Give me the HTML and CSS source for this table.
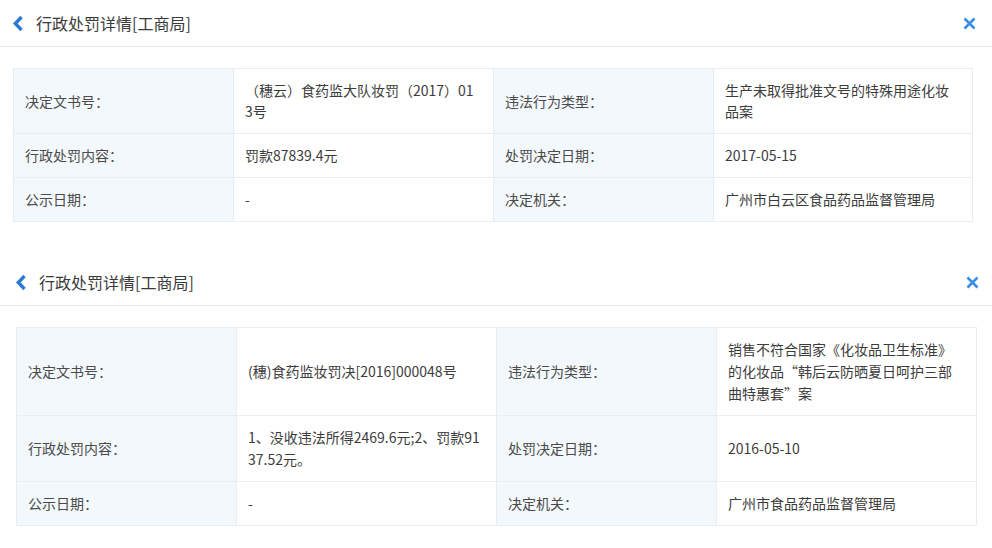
FILE: index.html
```html
<!DOCTYPE html>
<html lang="zh-CN">
<head>
<meta charset="UTF-8">
<title>行政处罚详情</title>
<link rel="stylesheet" href="styles.css">
</head>
<body>

<div class="panel">
    <div class="panel-head">
        <svg class="back" width="12" height="17" viewBox="0 0 12 17"><path d="M9.5 2 L3.3 8.5 L9.5 15" fill="none" stroke="#2b7bd6" stroke-width="3.4"/></svg>
        <span class="title">行政处罚详情[工商局]</span>
        <svg class="close" width="13" height="13" viewBox="0 0 13 13"><path d="M1.5 1.5 L11.5 11.5 M11.5 1.5 L1.5 11.5" stroke="#3a8ee6" stroke-width="2.6"/></svg>
    </div>
    <table class="detail">
        <tr>
            <td class="label">决定文书号：</td>
            <td>（穗云）食药监大队妆罚（2017）013号</td>
            <td class="label">违法行为类型：</td>
            <td>生产未取得批准文号的特殊用途化妆品案</td>
        </tr>
        <tr>
            <td class="label">行政处罚内容：</td>
            <td>罚款87839.4元</td>
            <td class="label">处罚决定日期：</td>
            <td>2017-05-15</td>
        </tr>
        <tr>
            <td class="label">公示日期：</td>
            <td>-</td>
            <td class="label">决定机关：</td>
            <td>广州市白云区食品药品监督管理局</td>
        </tr>
    </table>
</div>

<div class="panel panel-second">
    <div class="panel-head">
        <svg class="back" width="12" height="17" viewBox="0 0 12 17"><path d="M9.5 2 L3.3 8.5 L9.5 15" fill="none" stroke="#2b7bd6" stroke-width="3.4"/></svg>
        <span class="title">行政处罚详情[工商局]</span>
        <svg class="close" width="13" height="13" viewBox="0 0 13 13"><path d="M1.5 1.5 L11.5 11.5 M11.5 1.5 L1.5 11.5" stroke="#3a8ee6" stroke-width="2.6"/></svg>
    </div>
    <table class="detail">
        <tr>
            <td class="label">决定文书号：</td>
            <td>(穗)食药监妆罚决[2016]000048号</td>
            <td class="label">违法行为类型：</td>
            <td>销售不符合国家《化妆品卫生标准》的化妆品“韩后云防晒夏日呵护三部曲特惠套”案</td>
        </tr>
        <tr>
            <td class="label">行政处罚内容：</td>
            <td>1、没收违法所得2469.6元;2、罚款9137.52元。</td>
            <td class="label">处罚决定日期：</td>
            <td>2016-05-10</td>
        </tr>
        <tr>
            <td class="label">公示日期：</td>
            <td>-</td>
            <td class="label">决定机关：</td>
            <td>广州市食品药品监督管理局</td>
        </tr>
    </table>
</div>

</body>
</html>
```

FILE: styles.css
```css
body {
    margin: 0;
    padding: 0;
    background: #fff;
    font-family: "Noto Sans CJK SC", "Noto Sans", sans-serif;
    color: #333;
    text-spacing-trim: space-all;
}

.panel {
    padding-bottom: 37px;
}

/* 第二块截图整体偏右一点，行距也略大 */
.panel-second .panel-head {
    padding-left: 15px;
    padding-right: 13px;
}
.panel-second .detail {
    margin-left: 16px;
    width: 961px;
    line-height: 22px;
}
.panel-second .detail td {
    padding-top: 10px;
    padding-bottom: 11px;
}

.panel-head {
    display: flex;
    align-items: center;
    height: 46px;
    padding: 0 16px 0 12px;
    border-bottom: 1px solid #e6e8eb;
}
.panel-head .back {
    display: block;
    margin-right: 12px;
}
.panel-head .title {
    flex: 1;
    font-size: 16px;
    color: #3a3a3a;
}
.panel-head .close {
    display: block;
}

.detail {
    margin: 21px 0 0 13px;
    width: 960px;
    border-collapse: collapse;
    table-layout: fixed;
    font-size: 14px;
    line-height: 21px;
    color: #3c3c3c;
}
.detail td {
    border: 1px solid #e7edf3;
    padding: 11px 14px 11px 11px;
    vertical-align: middle;
    word-break: break-all;
}
.detail td:nth-child(1),
.detail td:nth-child(3) {
    width: 194px;
}
.detail td:nth-child(2) {
    width: 234px;
}
.detail .label {
    background: #f3f8fc;
    color: #4a4a4a;
}
```
